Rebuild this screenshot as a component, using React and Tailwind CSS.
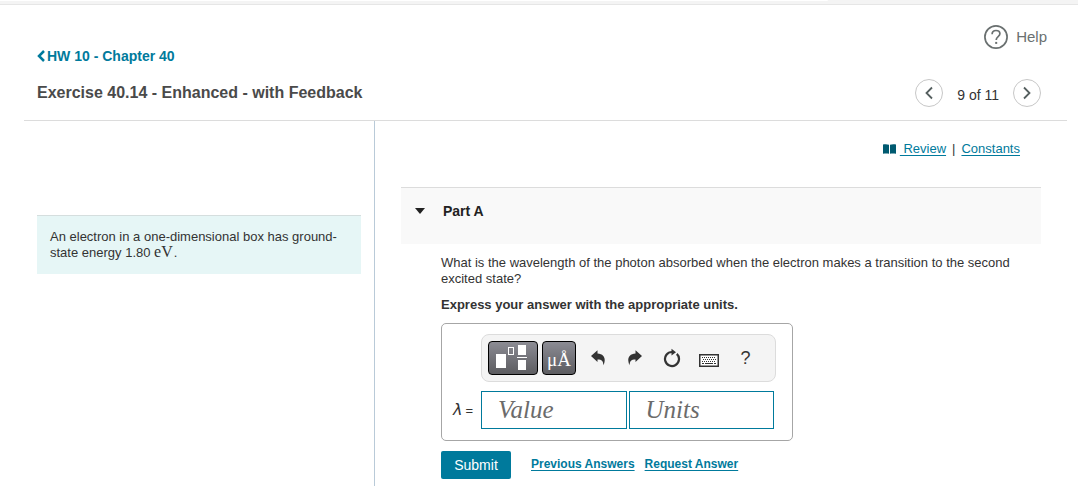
import React, { useState } from "react";

const linkStyle = "text-[#007a9c] underline underline-offset-2";
const toolStyle =
  "flex h-8 w-[37px] items-center justify-center text-[#333333]";
const fieldStyle =
  "h-[38px] min-w-0 flex-1 border border-[#007a9c] bg-white px-4 font-['Liberation_Serif',serif] text-[25px] text-[#333333] italic outline-none placeholder:text-[#6b6b6b]";

const Chevron = ({ direction }) => (
  <svg width="10" height="14" viewBox="0 0 10 14" fill="none" aria-hidden="true">
    <path
      d={direction === "left" ? "M8 1.500 2.500 7 8 12.500" : "M2 1.500 7.500 7 2 12.500"}
      stroke="#555f5f"
      strokeWidth="1.800"
    />
  </svg>
);

const TemplateIcon = () => (
  <svg width="50" height="34" viewBox="0 0 50 34" className="shrink-0" aria-hidden="true">
    <rect x="8" y="13" width="10" height="14" fill="#fff" />
    <rect x="20.500" y="6.500" width="5" height="7" fill="none" stroke="#fff" />
    <rect x="30" y="4" width="8" height="10" fill="#fff" />
    <rect x="29" y="16" width="10" height="1" fill="#fff" />
    <rect x="30" y="19" width="8" height="10" fill="#fff" />
  </svg>
);

const UndoIcon = () => (
  <svg width="16" height="16" viewBox="0 0 16 16" aria-hidden="true">
    <path
      d="M1 6 7.500.3v3.200c5 .2 7.500 3.300 7.200 7.300-.1 1.700-.6 3.200-1.500 4.400.3-3.800-1.200-5.700-5.700-5.700v2.600Z"
      fill="currentColor"
    />
  </svg>
);

const RedoIcon = () => (
  <svg width="16" height="16" viewBox="0 0 16 16" aria-hidden="true">
    <path
      d="M15 6 8.500.3v3.200c-5 .2-7.500 3.300-7.200 7.300.1 1.700.6 3.200 1.500 4.400-.3-3.800 1.200-5.700 5.700-5.700v2.600Z"
      fill="currentColor"
    />
  </svg>
);

const ResetIcon = () => (
  <svg width="18" height="20" viewBox="0 0 18 20" aria-hidden="true">
    <path
      d="M13.800 5.900A7 7 0 1 1 9 4"
      fill="none"
      stroke="currentColor"
      strokeWidth="2.200"
    />
    <path d="M8.500.8 13 4.200 8.500 7.400Z" fill="currentColor" />
  </svg>
);

const KeyboardIcon = () => (
  <svg width="20" height="13" viewBox="0 0 20 13" aria-hidden="true">
    <rect x=".75" y=".75" width="18.500" height="11.500" fill="#fff" stroke="currentColor" strokeWidth="1.500" />
    <path
      d="M3 3.500h14M4 5.500h13M3 7.500h14"
      stroke="currentColor"
      strokeDasharray="1 1"
    />
    <path d="M3 9.500h2M6 9.500h8M15 9.500h2" stroke="currentColor" />
  </svg>
);

const BookIcon = () => (
  <svg width="13" height="10" viewBox="0 0 13 10" aria-hidden="true">
    <path
      d="M0 .4C2 0 4.500 0 6 .8V9.800c-1.500-.5-4-.5-6 0ZM7 .8C8.500 0 11 0 13 .4v9.400c-2-.5-4.500-.5-6 0Z"
      fill="#005a70"
    />
  </svg>
);

const Header = () => (
  <header className="flex justify-between border-b border-[#dcdcdc]">
    <div className="pt-[43px] pb-[17px] pl-[13px]">
      <a
        href="#assignment"
        className="flex items-center gap-[2px] text-sm leading-4 font-bold text-[#007a9c]"
      >
        <svg width="8" height="12" viewBox="0 0 8 12" fill="none" aria-hidden="true">
          <path d="M7 1 2 6l5 5" stroke="currentColor" strokeWidth="2.500" />
        </svg>
        HW 10 - Chapter 40
      </a>
      <h1 className="mt-[19px] text-base leading-5 font-bold text-[#4a4a4a]">
        Exercise 40.14 - Enhanced - with Feedback
      </h1>
    </div>

    <div className="flex flex-col items-end pt-5 pr-5">
      <button className="flex items-center gap-2 text-[15px] leading-6 text-[#6a7070]">
        <svg width="24" height="24" viewBox="0 0 24 24" fill="none" aria-hidden="true">
          <circle cx="12" cy="12" r="11.100" stroke="currentColor" strokeWidth="1.700" />
          <path
            d="M8.100 9.300c0-2.500 1.600-3.800 3.900-3.800s3.900 1.300 3.900 3.300c0 2.900-3.700 2.800-3.700 6.100"
            stroke="currentColor"
            strokeWidth="1.700"
          />
          <path d="M11.200 16.900h2v2h-2z" fill="currentColor" />
        </svg>
        Help
      </button>
      <nav className="mt-[30px] mr-[6px] flex items-center gap-[14px] text-sm text-[#333333]">
        <button
          aria-label="Previous item"
          className="flex size-7 items-center justify-center rounded-full border border-[#c7c7c7]"
        >
          <Chevron direction="left" />
        </button>
        <span className="pt-1">9 of 11</span>
        <button
          aria-label="Next item"
          className="flex size-7 items-center justify-center rounded-full border border-[#c7c7c7]"
        >
          <Chevron direction="right" />
        </button>
      </nav>
    </div>
  </header>
);

const AnswerBox = () => {
  const [value, setValue] = useState("");
  const [units, setUnits] = useState("");

  const handleReset = () => {
    setValue("");
    setUnits("");
  };

  return (
    <div className="mt-[10px] w-full max-w-[352px] rounded-[5px] border border-[#a6a6a6] pt-[10px] pr-4 pb-[11px] pl-[11px]">
      <div className="ml-7 flex h-12 items-center rounded-lg border border-[#dcdcdc] bg-[#f4f4f4] pl-[6px]">
        <button
          aria-label="Templates"
          className="mr-1 flex h-[34px] w-[50px] items-center justify-center rounded border border-black bg-linear-to-b from-[#8c8c94] to-[#5c5c60]"
        >
          <TemplateIcon />
        </button>
        <button
          aria-label="Symbols"
          className="mr-[3px] flex h-[34px] w-[34px] justify-center rounded border border-black bg-linear-to-b from-[#8c8c94] to-[#5c5c60] pt-[2px] font-['Liberation_Serif',serif] text-[19px] leading-8 text-white"
        >
          μÅ
        </button>
        <button aria-label="Undo" className={toolStyle}>
          <UndoIcon />
        </button>
        <button aria-label="Redo" className={toolStyle}>
          <RedoIcon />
        </button>
        <button aria-label="Reset" className={toolStyle} onClick={handleReset}>
          <ResetIcon />
        </button>
        <button aria-label="Keyboard shortcuts" className={`${toolStyle} pt-1`}>
          <KeyboardIcon />
        </button>
        <button aria-label="Help" className={`${toolStyle} text-lg`}>
          ?
        </button>
      </div>

      <div className="mt-[9px] mr-[2px] flex items-center gap-[2px]">
        <label
          htmlFor="value"
          className="flex w-[26px] shrink-0 items-baseline gap-[3px] text-[13px] text-[#333333]"
        >
          <i className="font-['DejaVu_Sans',sans-serif] text-base leading-4">λ</i>
          <span>=</span>
        </label>
        <input
          id="value"
          type="text"
          placeholder="Value"
          value={value}
          onChange={(e) => setValue(e.target.value)}
          className={fieldStyle}
        />
        <input
          type="text"
          aria-label="Units"
          placeholder="Units"
          value={units}
          onChange={(e) => setUnits(e.target.value)}
          className={fieldStyle}
        />
      </div>
    </div>
  );
};

const PartA = () => {
  const [open, setOpen] = useState(true);

  return (
    <>
      <div className="mt-[30px] border-t border-[#dcdcdc] bg-[#f9f9f9] pt-[15px] pb-[25px] pl-[14px]">
        <button
          aria-expanded={open}
          onClick={() => setOpen(!open)}
          className="flex items-center gap-[18px] text-sm leading-4 font-bold text-[#222222]"
        >
          <svg width="10" height="6" viewBox="0 0 10 6" aria-hidden="true">
            <path d="M0 0h10L5 6Z" fill="currentColor" />
          </svg>
          Part A
        </button>
      </div>

      {open && (
        <div className="pt-[11px] pl-10 text-[13px] leading-4 text-[#333333]">
          <p>
            What is the wavelength of the photon absorbed when the electron makes
            a transition to the second excited state?
          </p>
          <p className="mt-[10px] font-bold">
            Express your answer with the appropriate units.
          </p>
          <AnswerBox />
          <div className="mt-[10px] flex items-start text-xs font-bold">
            <button className="mr-5 h-7 w-[70px] rounded-[2px] bg-[#007a9c] text-sm font-normal text-white">
              Submit
            </button>
            <a href="#previous" className={`${linkStyle} mt-[5px] mr-[10px]`}>
              Previous Answers
            </a>
            <a href="#request" className={`${linkStyle} mt-[5px]`}>
              Request Answer
            </a>
          </div>
        </div>
      )}
    </>
  );
};

const App = () => {
  return (
    <div className="flex min-h-screen flex-col bg-white font-['Liberation_Sans',Arial,sans-serif]">
      <div className="h-[5px] border-b border-[#e6e6e6] bg-[#f4f4f4]">
        <div className="mr-[250px] h-px rounded-br bg-white" />
      </div>

      <div className="mr-[11px] ml-6 flex flex-1 flex-col">
        <Header />
        <div className="flex flex-1">
          <aside className="w-[351px] shrink-0 border-r border-[#b9cad8] px-[13px] pt-[94px]">
            <p className="border-t border-[#d5dede] bg-[#e6f6f6] px-[13px] py-[13px] text-[13px] leading-4 text-[#333333]">
              An electron in a one-dimensional box has ground-state energy 1.80{" "}
              <span className="mr-px font-['Liberation_Serif',serif] text-base leading-3">
                eV
              </span>
              .
            </p>
          </aside>

          <main className="min-w-0 flex-1 px-[26px] pt-5">
            <div className="flex items-center justify-end pr-[21px] text-[13px] leading-4 text-[#333333]">
              <BookIcon />
              <a href="#review" className={`${linkStyle} ml-1 whitespace-pre`}>
                {" Review"}
              </a>
              <span className="mx-[6px]">|</span>
              <a href="#constants" className={linkStyle}>
                Constants
              </a>
            </div>
            <PartA />
          </main>
        </div>
      </div>
    </div>
  );
};

export default App;
